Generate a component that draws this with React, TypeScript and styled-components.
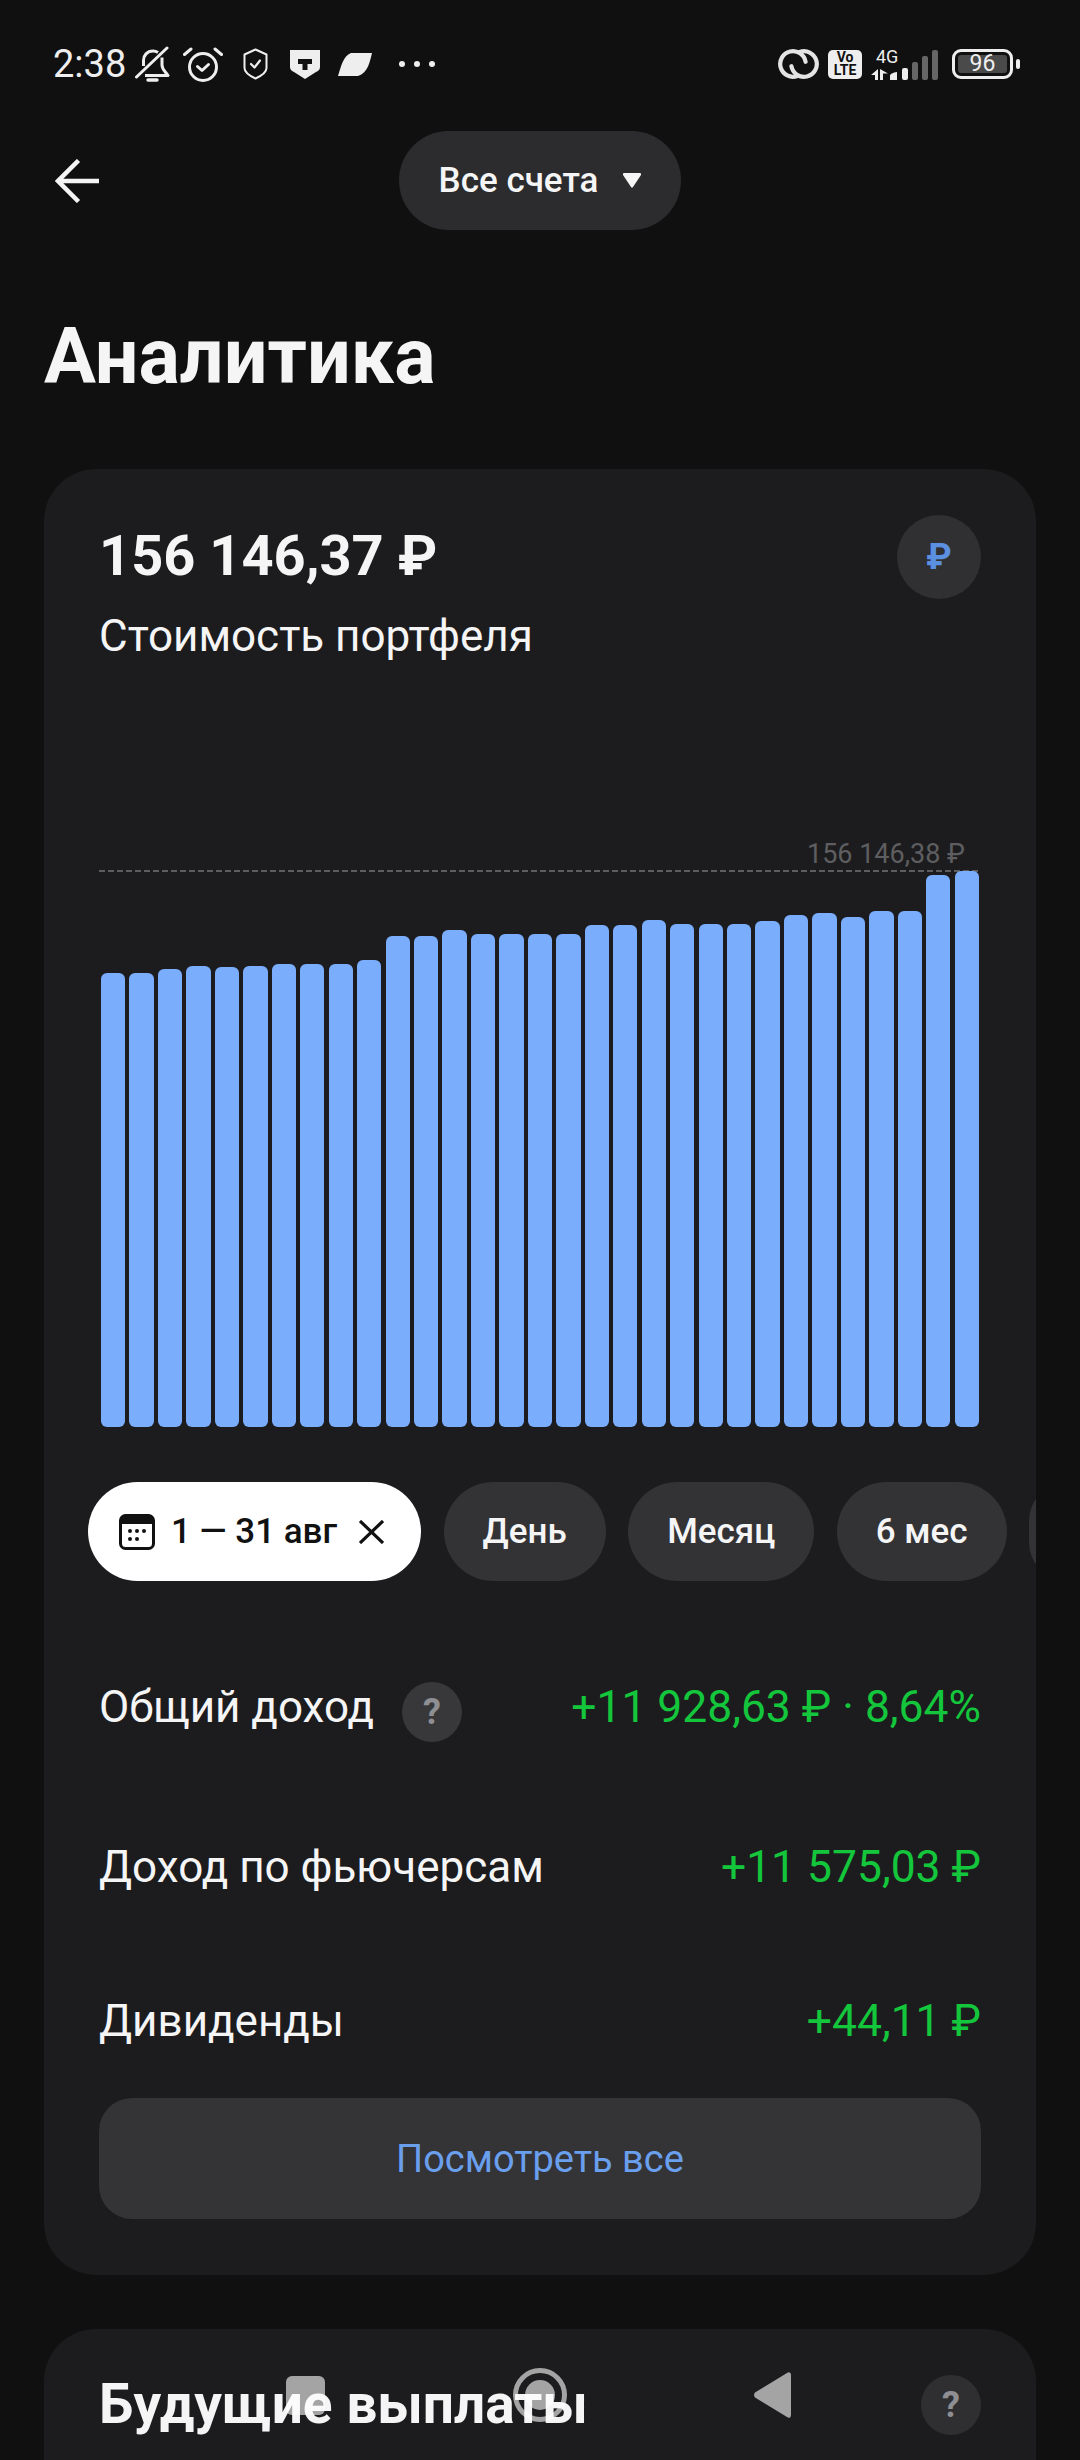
import React from 'react';
import styled, { createGlobalStyle } from 'styled-components';

const BAR_TOPS = [
  973, 973, 969, 966, 967, 966, 964, 964, 964, 960, 936, 936, 930, 934, 934, 934, 934, 925, 925,
  920, 924, 924, 924, 921, 915, 913, 917, 911, 911, 875, 871,
];
const BAR_BOTTOM = 1427;

const App: React.FC = () => (
  <Page>
    <GlobalStyle />
    <StatusBar>
      <StatusGroup>
        <Time>2:38</Time>
        <StatusIcon $ml={9} width="35" height="36" viewBox="0 0 35 36" fill="none" stroke="#eee" strokeWidth="3">
          <path d="M23 6.5C21.5 5.5 19.8 5 18 5C12 5 8.5 9.5 8.5 14.5V20" />
          <path d="M27 11.5V19C27 23.5 30 25 33 29.5H10" strokeLinejoin="round" />
          <path d="M1.5 31L32 2" strokeLinecap="round" />
          <path d="M13 34H22" strokeWidth="3.4" strokeLinecap="round" />
        </StatusIcon>
        <StatusIcon $ml={13} width="40" height="36" viewBox="0 0 40 36" fill="none" stroke="#eee" strokeWidth="3">
          <circle cx="20" cy="21" r="13.5" />
          <path d="M14.5 20.5L19 24.5L25.5 18.5" strokeLinecap="round" strokeLinejoin="round" />
          <path d="M1.5 8.5L8 3M38.5 8.5L32 3" strokeLinecap="round" />
        </StatusIcon>
        <StatusIcon $ml={20} width="25" height="32" viewBox="0 0 25 32" fill="none" stroke="#eee" strokeWidth="2">
          <path d="M12.5 1.5L23.5 6.5V20C23.5 24 18 28 12.5 30.5C7 28 1.5 24 1.5 20V6.5Z" strokeLinejoin="round" />
          <path d="M8 16L11.5 19.5L17 12.5" strokeWidth="2.2" strokeLinecap="round" strokeLinejoin="round" />
        </StatusIcon>
        <StatusIcon $ml={22} width="30" height="29" viewBox="0 0 30 29">
          <path d="M0 0H30V17C30 20 28 21 26 22L15 29L4 22C2 21 0 20 0 17Z" fill="#eee" />
          <path d="M8 9H22V14H17.5V20H12.5V14H8Z" fill="#111" />
        </StatusIcon>
        <StatusIcon $ml={18} width="34" height="23" viewBox="0 0 34 23">
          <path d="M13 0H34C32 8 30 20 20 23H0C3 14 5 3 13 0Z" fill="#eee" />
        </StatusIcon>
        <Dots>
          <Dot />
          <Dot />
          <Dot />
        </Dots>
      </StatusGroup>
      <StatusGroup>
        <StatusIcon width="41" height="30" viewBox="0 0 41 30" fill="none" stroke="#e4e4e4" strokeWidth="4.2" strokeLinecap="round">
          <path d="M19.4 27A12.8 12.8 0 1 1 27.6 12.8" />
          <path d="M21.6 3A12.8 12.8 0 1 1 13.4 17.2" />
        </StatusIcon>
        <VoLte>
          <span>Vo</span>
          <span>LTE</span>
        </VoLte>
        <SignalCluster>
          <SignalLabel>4G</SignalLabel>
          <StatusIcon width="68" height="33" viewBox="0 0 68 33">
            <path d="M8 21V32H5V27H1Z" fill="#eee" />
            <path d="M10 21V32H13V25.5H18Z" fill="#eee" />
            <path d="M20 32V27.5C20 26 23 24.5 27 24V32Z" fill="#eee" />
            <rect x="32" y="20" width="6" height="12" rx="2" fill="#eee" />
            <rect x="42" y="14" width="6" height="18" rx="2" fill="#666" />
            <rect x="52" y="8" width="6" height="24" rx="2" fill="#666" />
            <rect x="62" y="2" width="6" height="30" rx="2" fill="#666" />
          </StatusIcon>
        </SignalCluster>
        <Battery>
          <BatteryFill>96</BatteryFill>
        </Battery>
        <BatteryNub />
      </StatusGroup>
    </StatusBar>

    <NavRow>
      <BackIcon width="44" height="44" viewBox="0 0 44 44" fill="none" stroke="#f5f5f6" strokeWidth="4.5">
        <path d="M44 22H3M23.5 1.5L3 22L23.5 42.5" />
      </BackIcon>
      <AccountPill>
        Все счета
        <svg width="18" height="15" viewBox="0 0 18 15">
          <path d="M1 0H17C18 0 18.4 1 18 2L10 14C9.5 15 8.5 15 8 14L0 2C-0.4 1 0 0 1 0Z" fill="#f5f5f6" />
        </svg>
      </AccountPill>
    </NavRow>

    <Title>Аналитика</Title>

    <Card>
      <PortfolioHead>
        <div>
          <Balance>156 146,37 ₽</Balance>
          <Subtitle>Стоимость портфеля</Subtitle>
        </div>
        <CurrencyButton>₽</CurrencyButton>
      </PortfolioHead>

      <Chart>
        <ChartLabel>156 146,38 ₽</ChartLabel>
        <DashLine />
        <Bars>
          {BAR_TOPS.map((top, i) => (
            <Bar key={i} style={{ height: BAR_BOTTOM - top }} />
          ))}
        </Bars>
      </Chart>

      <Chips>
        <Chip $active>
          <svg width="36" height="36" viewBox="0 0 36 36">
            <rect x="1.5" y="1.5" width="33" height="33" rx="5" fill="none" stroke="#111" strokeWidth="3" />
            <path d="M1.5 6.5C1.5 3 3 1.5 6.5 1.5H29.5C33 1.5 34.5 3 34.5 6.5V10H1.5Z" fill="#111" />
            <circle cx="11" cy="17" r="2" fill="#111" />
            <circle cx="18" cy="17" r="2" fill="#111" />
            <circle cx="25" cy="17" r="2" fill="#111" />
            <circle cx="11" cy="25" r="2" fill="#111" />
            <circle cx="18" cy="25" r="2" fill="#111" />
          </svg>
          <ChipDate>1 — 31 авг</ChipDate>
          <svg width="25" height="24" viewBox="0 0 25 24" fill="none" stroke="#111" strokeWidth="3.2">
            <path d="M1 1L24 23M24 1L1 23" />
          </svg>
        </Chip>
        <Chip>День</Chip>
        <Chip>Месяц</Chip>
        <Chip>6 мес</Chip>
        <Chip />
      </Chips>

      <Row $top={101}>
        <RowLabel>
          Общий доход
          <HelpButton $bg="#38383b">?</HelpButton>
        </RowLabel>
        <RowValue>+11 928,63 ₽ · 8,64%</RowValue>
      </Row>
      <Row $top={99}>
        <RowLabel>Доход по фьючерсам</RowLabel>
        <RowValue>+11 575,03 ₽</RowValue>
      </Row>
      <Row $top={93}>
        <RowLabel>Дивиденды</RowLabel>
        <RowValue>+44,11 ₽</RowValue>
      </Row>

      <SeeAllButton>Посмотреть все</SeeAllButton>
    </Card>

    <PayoutsCard>
      <PayoutsTitle>Будущие выплаты</PayoutsTitle>
      <HelpButton $bg="#2f2f32">?</HelpButton>
    </PayoutsCard>

    <SystemNav>
      <svg width="39" height="39" viewBox="0 0 39 39">
        <rect width="39" height="39" rx="6" fill="#fff" />
      </svg>
      <svg width="54" height="54" viewBox="0 0 54 54" fill="none">
        <circle cx="27" cy="27" r="24.5" stroke="#fff" strokeWidth="5" />
        <circle cx="27" cy="27" r="15" fill="#fff" />
      </svg>
      <svg width="37" height="46" viewBox="0 0 37 46">
        <path d="M37 3V43C37 46 34.5 46.5 33 45L1 25.5C-0.3 24 -0.3 22 1 20.5L33 1C34.5 -0.5 37 0 37 3Z" fill="#fff" />
      </svg>
    </SystemNav>
  </Page>
);

const GlobalStyle = createGlobalStyle`
  html, body {
    margin: 0;
    background: #101011;
  }

  body {
    font-family: Roboto, "Liberation Sans", sans-serif;
    color: #f5f5f6;
  }
`;

const Page = styled.div`
  position: relative;
  width: 1080px;
  height: 2460px;
  overflow: hidden;
  background: #101011;
`;

const StatusBar = styled.div`
  display: flex;
  align-items: center;
  justify-content: space-between;
  height: 131px;
  padding: 0 60px 3px 53px;
  box-sizing: border-box;
`;

const StatusGroup = styled.div`
  display: flex;
  align-items: center;
`;

const Time = styled.span`
  font-size: 38px;
  color: #eee;
  line-height: 1;
`;

const StatusIcon = styled.svg<{ $ml?: number }>`
  display: block;
  flex: none;
  margin-left: ${(p) => p.$ml ?? 0}px;
`;

const Dots = styled.div`
  display: flex;
  gap: 9px;
  margin-left: 27px;
`;

const Dot = styled.span`
  width: 6px;
  height: 6px;
  border-radius: 50%;
  background: #eee;
`;

const VoLte = styled.div`
  display: flex;
  flex-direction: column;
  align-items: center;
  justify-content: center;
  width: 34px;
  height: 29px;
  margin-left: 9px;
  border-radius: 5px;
  background: #eee;
  color: #111;
  font-size: 14px;
  font-weight: 700;
  line-height: 13px;
`;

const SignalCluster = styled.div`
  position: relative;
  margin-left: 8px;
`;

const SignalLabel = styled.span`
  position: absolute;
  left: 6px;
  top: 0;
  color: #eee;
  font-size: 18px;
  line-height: 18px;
`;

const Battery = styled.div`
  display: flex;
  width: 61px;
  height: 30px;
  margin-left: 14px;
  padding: 3px;
  box-sizing: border-box;
  border: 3px solid #eee;
  border-radius: 9px;
`;

const BatteryFill = styled.div`
  flex: 1;
  border-radius: 3px;
  background: #4a4a4b;
  color: #eee;
  font-size: 23px;
  line-height: 18px;
  text-align: center;
`;

const BatteryNub = styled.div`
  width: 4px;
  height: 10px;
  margin-left: 3px;
  border-radius: 2px;
  background: #eee;
`;

const NavRow = styled.div`
  position: relative;
  display: flex;
  align-items: center;
  justify-content: center;
  height: 99px;
`;

const BackIcon = styled.svg`
  position: absolute;
  left: 55px;
  top: 28px;
`;

const AccountPill = styled.div`
  display: flex;
  align-items: center;
  gap: 25px;
  height: 99px;
  padding: 0 40px;
  box-sizing: border-box;
  border-radius: 50px;
  background: #2c2c2e;
  font-size: 35px;
  font-weight: 500;
`;

const Title = styled.h1`
  margin: 85px 0 70px 44px;
  font-size: 77.3px;
  font-weight: 700;
  line-height: 84px;
`;

const Card = styled.section`
  margin: 0 44px;
  padding: 46px 0 56px;
  border-radius: 52px;
  background: #1c1c1e;
  overflow: hidden;
`;

const PortfolioHead = styled.div`
  display: flex;
  justify-content: space-between;
  padding: 0 55px;
`;

const Balance = styled.div`
  margin-top: 8px;
  font-size: 56px;
  font-weight: 700;
  line-height: 66px;
`;

const Subtitle = styled.div`
  margin-top: 22px;
  font-size: 44px;
  line-height: 50px;
`;

const CurrencyButton = styled.div`
  display: flex;
  align-items: center;
  justify-content: center;
  width: 84px;
  height: 84px;
  border-radius: 50%;
  background: #303033;
  color: #5b8fe0;
  font-size: 36px;
  font-weight: 700;
`;

const Chart = styled.div`
  margin: 178px 57px 0 55px;
`;

const ChartLabel = styled.div`
  padding-right: 14px;
  color: #5e5e60;
  font-size: 27px;
  line-height: 30px;
  text-align: right;
`;

const DashLine = styled.div`
  height: 2px;
  margin-top: 1px;
  background: repeating-linear-gradient(90deg, #5e5e60 0 6px, transparent 6px 9px);
`;

const Bars = styled.div`
  display: flex;
  align-items: flex-end;
  gap: 4.17px;
  height: 555px;
  padding-left: 2px;
`;

const Bar = styled.div`
  flex: 1;
  border-radius: 6px;
  background: #7aaefc;
`;

const Chips = styled.div`
  display: flex;
  gap: 22.4px;
  margin-top: 55px;
  padding-left: 44px;
`;

const Chip = styled.div<{ $active?: boolean }>`
  display: flex;
  flex: none;
  align-items: center;
  height: 99px;
  padding: ${(p) => (p.$active ? '0 37px 0 31px' : '0 39px')};
  box-sizing: border-box;
  border-radius: 50px;
  background: ${(p) => (p.$active ? '#fff' : '#333336')};
  color: ${(p) => (p.$active ? '#111' : '#f5f5f6')};
  font-size: 35px;
  font-weight: 500;
`;

const ChipDate = styled.span`
  margin: 0 22px 0 16px;
`;

const Row = styled.div<{ $top: number }>`
  display: flex;
  justify-content: space-between;
  height: 61px;
  margin-top: ${(p) => p.$top}px;
  padding: 0 55px;
`;

const RowLabel = styled.div`
  display: flex;
  gap: 28px;
  font-size: 44px;
  line-height: 50px;
`;

const RowValue = styled.div`
  color: #14c63c;
  font-size: 44.4px;
  line-height: 50px;
`;

const HelpButton = styled.div<{ $bg: string }>`
  display: flex;
  align-items: center;
  justify-content: center;
  flex: none;
  width: 60px;
  height: 60px;
  border-radius: 50%;
  background: ${(p) => p.$bg};
  color: #8e8e93;
  font-size: 36px;
  font-weight: 700;
  line-height: 1;
`;

const SeeAllButton = styled.div`
  display: flex;
  align-items: center;
  justify-content: center;
  height: 121px;
  margin: 41px 55px 0;
  border-radius: 33px;
  background: #343436;
  color: #6a9fee;
  font-size: 38px;
`;

const PayoutsCard = styled.section`
  display: flex;
  justify-content: space-between;
  height: 400px;
  margin: 54px 44px 0;
  padding: 46px 55px 0;
  box-sizing: border-box;
  border-radius: 52px;
  background: #1c1c1e;
`;

const PayoutsTitle = styled.h2`
  margin: -3px 0 0;
  font-size: 55px;
  font-weight: 700;
  line-height: 64px;
`;

const SystemNav = styled.div`
  position: absolute;
  left: 286px;
  top: 2368px;
  display: flex;
  align-items: center;
  justify-content: space-between;
  width: 505px;
  height: 54px;
  opacity: 0.6;
`;

export default App;
